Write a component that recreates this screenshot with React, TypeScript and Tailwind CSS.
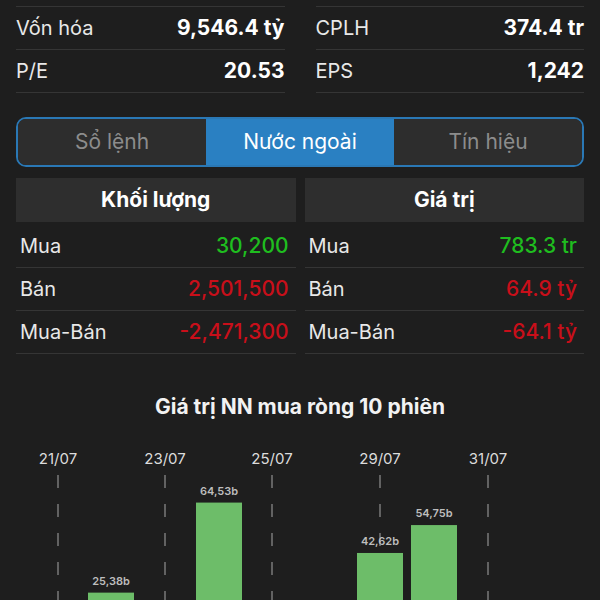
const stats = [
  [
    { label: "Vốn hóa", value: "9,546.4 tỷ" },
    { label: "P/E", value: "20.53" },
  ],
  [
    { label: "CPLH", value: "374.4 tr" },
    { label: "EPS", value: "1,242" },
  ],
];

const tabs = ["Sổ lệnh", "Nước ngoài", "Tín hiệu"];

const volume = [
  { label: "Mua", value: "30,200", up: true },
  { label: "Bán", value: "2,501,500", up: false },
  { label: "Mua-Bán", value: "-2,471,300", up: false },
];

const amount = [
  { label: "Mua", value: "783.3 tr", up: true },
  { label: "Bán", value: "64.9 tỷ", up: false },
  { label: "Mua-Bán", value: "-64.1 tỷ", up: false },
];

const ticks = [
  { x: 58, label: "21/07" },
  { x: 165, label: "23/07" },
  { x: 272, label: "25/07" },
  { x: 380, label: "29/07" },
  { x: 488, label: "31/07" },
];

// y in chart coords, zero line sits below the visible area
const bars = [
  { x: 111, value: 25.38, label: "25,38b" },
  { x: 219, value: 64.53, label: "64,53b" },
  { x: 380, value: 42.62, label: "42,62b" },
  { x: 434, value: 54.75, label: "54,75b" },
];
const ZERO = 210;
const SCALE = 2.3;

function FlowTable({ title, rows }: { title: string; rows: typeof volume }) {
  return (
    <div className="flex flex-col">
      <div className="h-[44px] bg-[#2e2e2e] flex items-center justify-center text-[21px] font-bold text-white">
        {title}
      </div>
      <div className="mt-[3px]">
        {rows.map((r) => (
          <div
            key={r.label}
            className="h-[43px] flex items-center justify-between pl-[4px] pr-[7px] border-b border-[#353535] text-[20px]"
          >
            <span className="text-[#e8e8e8]">{r.label}</span>
            <span className={r.up ? "text-[21px] font-medium text-[#1fbd1f]" : "text-[21px] font-medium text-[#c80f1a]"}>
              {r.value}
            </span>
          </div>
        ))}
      </div>
    </div>
  );
}

export default function App() {
  return (
    <div className="w-[600px] h-[600px] overflow-hidden bg-[#1e1e1e] font-['Inter','Liberation_Sans',sans-serif]">
      <div className="grid grid-cols-2 gap-x-[31px] px-4 pt-[6px]">
        {stats.map((col, i) => (
          <div key={i} className="border-t border-[#353535]">
            {col.map((s) => (
              <div key={s.label} className="h-[43px] flex items-center justify-between border-b border-[#353535] text-[20px]">
                <span className="text-[#e8e8e8]">{s.label}</span>
                <span className="text-[21px] font-bold text-white">{s.value}</span>
              </div>
            ))}
          </div>
        ))}
      </div>

      <div className="mx-4 mt-[24px] h-[50px] rounded-[10px] border-2 border-[#2a78b5] flex overflow-hidden">
        {tabs.map((t, i) => (
          <div
            key={t}
            className={
              i === 1
                ? "flex-1 flex items-center justify-center bg-[#2a80c2] text-white text-[21px]"
                : "flex-1 flex items-center justify-center bg-[#2d2d2d] text-[#8c8c8c] text-[21px]"
            }
          >
            {t}
          </div>
        ))}
      </div>

      <div className="grid grid-cols-2 gap-x-[9px] px-4 mt-[11px]">
        <FlowTable title="Khối lượng" rows={volume} />
        <FlowTable title="Giá trị" rows={amount} />
      </div>

      <div className="mt-[37px] text-center text-[21px] font-bold text-[#f2f2f2]">
        Giá trị NN mua ròng 10 phiên
      </div>

      <svg width="600" height="160" className="mt-[18px] block">
        {ticks.map((t) => (
          <g key={t.label}>
            <text x={t.x} y={23} textAnchor="middle" fontSize="15" fill="#dcdcdc" fontFamily="Inter, sans-serif">
              {t.label}
            </text>
            <line x1={t.x} y1={34} x2={t.x} y2={160} stroke="#7a7a7a" strokeWidth="1.5" strokeDasharray="13 16" />
          </g>
        ))}
        {bars.map((b) => {
          const top = ZERO - b.value * SCALE;
          return (
            <g key={b.label}>
              <rect x={b.x - 23} y={top} width={46} height={ZERO - top} fill="#6dbd69" />
              <text
                x={b.x}
                y={top - 8}
                textAnchor="middle"
                fontSize="11"
                fontWeight="600"
                fill="#bdbdbd"
                fontFamily="Inter, sans-serif"
              >
                {b.label}
              </text>
            </g>
          );
        })}
      </svg>
    </div>
  );
}
